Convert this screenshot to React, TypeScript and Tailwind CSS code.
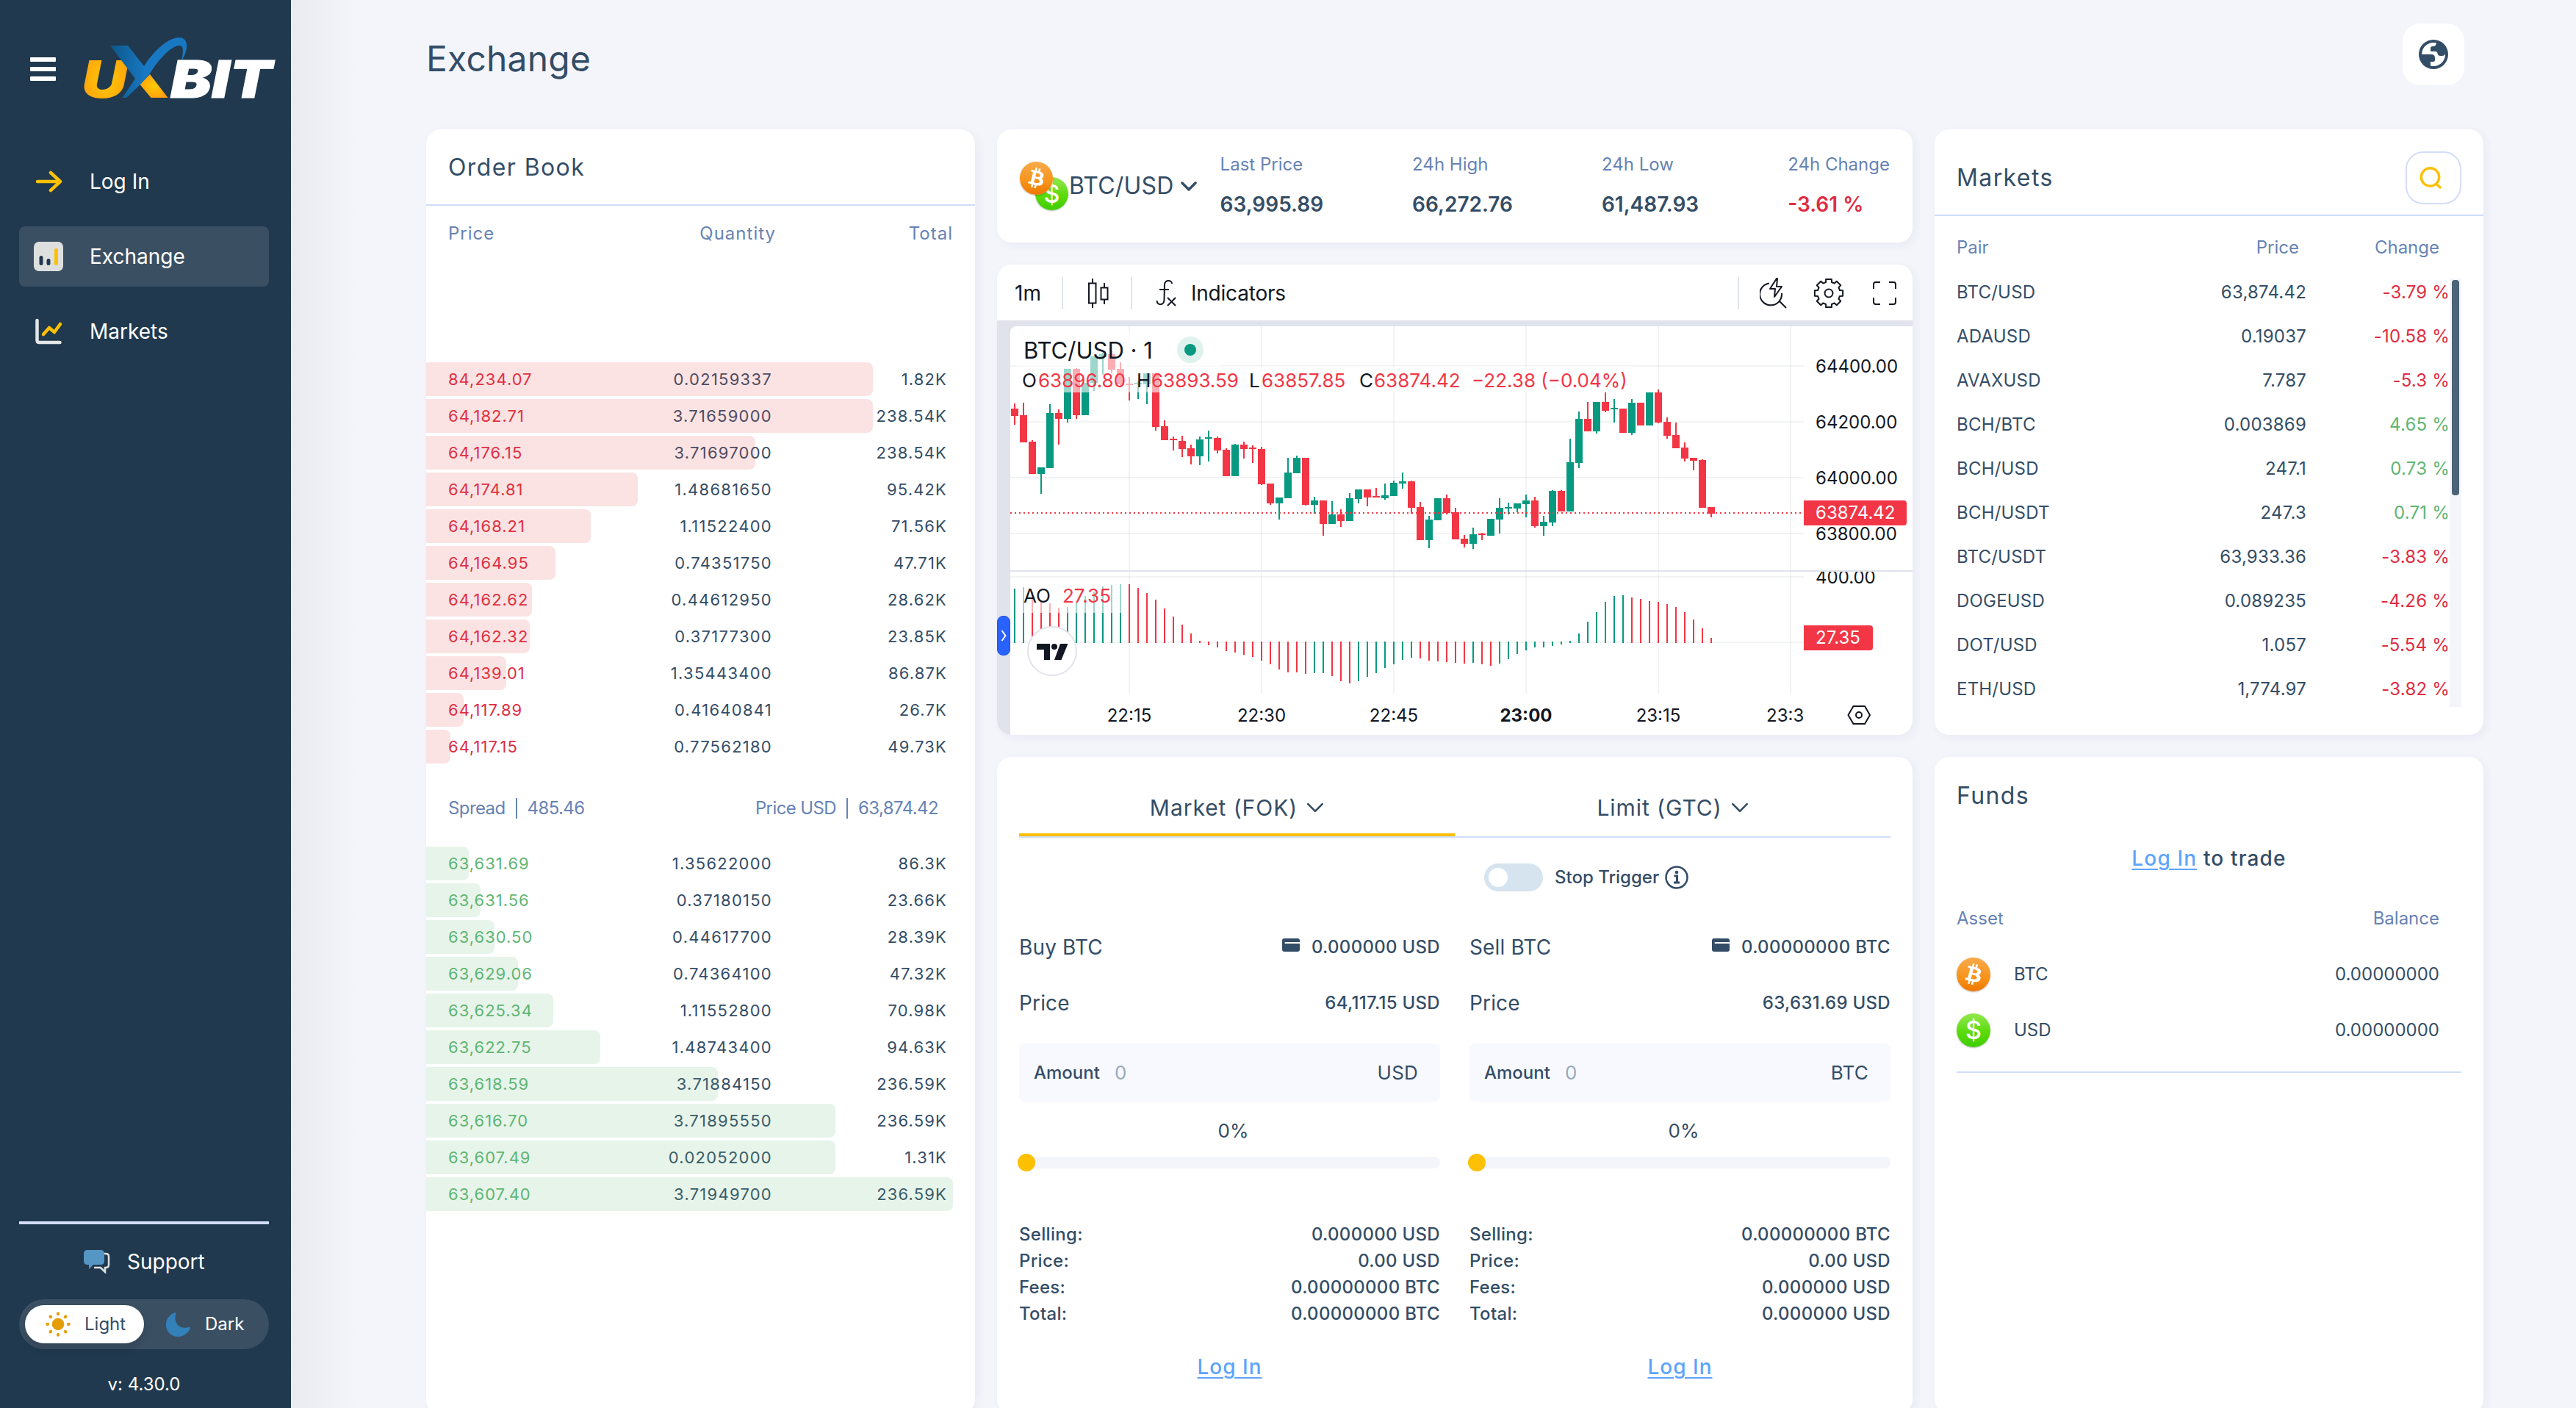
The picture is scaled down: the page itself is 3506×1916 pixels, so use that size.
import type { ReactNode } from "react"
import { SiBitcoin } from "react-icons/si"

type Candle = [number, number, number, number, 0 | 1]

const asks = [
  { price: "84,234.07", qty: "0.02159337", total: "1.82K", depth: 608 },
  { price: "64,182.71", qty: "3.71659000", total: "238.54K", depth: 608 },
  { price: "64,176.15", qty: "3.71697000", total: "238.54K", depth: 448 },
  { price: "64,174.81", qty: "1.48681650", total: "95.42K", depth: 288 },
  { price: "64,168.21", qty: "1.11522400", total: "71.56K", depth: 224 },
  { price: "64,164.95", qty: "0.74351750", total: "47.71K", depth: 176 },
  { price: "64,162.62", qty: "0.44612950", total: "28.62K", depth: 144 },
  { price: "64,162.32", qty: "0.37177300", total: "23.85K", depth: 141 },
  { price: "64,139.01", qty: "1.35443400", total: "86.87K", depth: 109 },
  { price: "64,117.89", qty: "0.41640841", total: "26.7K", depth: 51 },
  { price: "64,117.15", qty: "0.77562180", total: "49.73K", depth: 33 },
]

const bids = [
  { price: "63,631.69", qty: "1.35622000", total: "86.3K", depth: 58 },
  { price: "63,631.56", qty: "0.37180150", total: "23.66K", depth: 74 },
  { price: "63,630.50", qty: "0.44617700", total: "28.39K", depth: 93 },
  { price: "63,629.06", qty: "0.74364100", total: "47.32K", depth: 125 },
  { price: "63,625.34", qty: "1.11552800", total: "70.98K", depth: 173 },
  { price: "63,622.75", qty: "1.48743400", total: "94.63K", depth: 237 },
  { price: "63,618.59", qty: "3.71884150", total: "236.59K", depth: 397 },
  { price: "63,616.70", qty: "3.71895550", total: "236.59K", depth: 557 },
  { price: "63,607.49", qty: "0.02052000", total: "1.31K", depth: 557 },
  { price: "63,607.40", qty: "3.71949700", total: "236.59K", depth: 717 },
]

const markets = [
  { pair: "BTC/USD", price: "63,874.42", change: "-3.79 %" },
  { pair: "ADAUSD", price: "0.19037", change: "-10.58 %" },
  { pair: "AVAXUSD", price: "7.787", change: "-5.3 %" },
  { pair: "BCH/BTC", price: "0.003869", change: "4.65 %" },
  { pair: "BCH/USD", price: "247.1", change: "0.73 %" },
  { pair: "BCH/USDT", price: "247.3", change: "0.71 %" },
  { pair: "BTC/USDT", price: "63,933.36", change: "-3.83 %" },
  { pair: "DOGEUSD", price: "0.089235", change: "-4.26 %" },
  { pair: "DOT/USD", price: "1.057", change: "-5.54 %" },
  { pair: "ETH/USD", price: "1,774.97", change: "-3.82 %" },
]

const stats = [
  { label: "Last Price", value: "63,995.89" },
  { label: "24h High", value: "66,272.76" },
  { label: "24h Low", value: "61,487.93" },
  { label: "24h Change", value: "-3.61 %" },
]

// body top, body bottom, high, low, up
const candles: Candle[] = [
  [556, 566, 549, 578, 0], [565, 602, 548, 602, 0], [601, 645, 599, 645, 0], [636, 645, 636, 672, 1],
  [562, 637, 550, 637, 1], [562, 570, 557, 605, 0], [502, 570, 502, 575, 1], [502, 565, 501, 570, 0],
  [521, 565, 521, 565, 1], [485, 521, 485, 532, 1], [482, 486, 480, 510, 1], [482, 503, 477, 508, 0],
  [502, 523, 493, 525, 0], [522, 524, 513, 545, 0], [521, 523, 518, 543, 1], [508, 523, 508, 550, 1],
  [508, 581, 507, 586, 0], [580, 599, 572, 599, 0], [597, 599, 594, 613, 0], [600, 611, 593, 622, 0],
  [610, 621, 605, 632, 0], [598, 621, 594, 633, 1], [595, 597, 586, 628, 1], [596, 613, 594, 617, 0],
  [612, 648, 610, 648, 0], [605, 648, 604, 648, 1], [605, 611, 601, 624, 0], [609, 611, 606, 630, 0],
  [611, 659, 608, 660, 0], [658, 685, 658, 687, 0], [677, 685, 677, 707, 1], [643, 678, 623, 678, 1],
  [623, 644, 620, 644, 1], [623, 687, 623, 688, 0], [681, 687, 676, 699, 1], [681, 713, 681, 729, 0],
  [700, 713, 682, 713, 1], [700, 709, 693, 717, 0], [678, 709, 671, 709, 1], [666, 679, 666, 685, 1],
  [666, 677, 666, 689, 0], [675, 677, 664, 677, 0], [674, 678, 658, 680, 1], [657, 675, 654, 675, 1],
  [655, 658, 643, 665, 1], [655, 691, 654, 699, 0], [690, 735, 683, 735, 0], [707, 735, 702, 746, 1],
  [678, 708, 678, 708, 1], [678, 698, 673, 700, 0], [697, 734, 691, 734, 0], [733, 740, 728, 745, 0],
  [727, 740, 718, 747, 1], [726, 728, 725, 735, 0], [706, 729, 706, 729, 1], [691, 707, 678, 726, 1],
  [690, 692, 684, 700, 1], [685, 692, 685, 697, 1], [681, 686, 673, 704, 1], [681, 716, 676, 718, 0],
  [710, 716, 702, 729, 1], [668, 711, 667, 716, 1], [668, 696, 667, 696, 0], [629, 696, 597, 696, 1],
  [570, 630, 560, 637, 1], [570, 587, 547, 587, 0], [547, 587, 547, 590, 1], [547, 559, 534, 561, 0],
  [555, 557, 543, 575, 1], [556, 589, 556, 589, 0], [548, 589, 543, 592, 1], [548, 579, 548, 579, 0],
  [534, 579, 534, 579, 1], [534, 575, 530, 576, 0], [574, 593, 568, 597, 0], [592, 610, 575, 610, 0],
  [609, 624, 602, 628, 0], [623, 627, 623, 640, 0], [626, 691, 625, 691, 0], [690, 699, 690, 704, 0],
]

// awesome oscillator bar ends, up
const oscillator: [number, 0 | 1][] = [
  [801, 1], [799, 1], [805, 0], [817, 0], [821, 0], [827, 0], [826, 1], [820, 1], [811, 1], [805, 1],
  [798, 1], [796, 1], [795, 1], [795, 0], [800, 0], [807, 0], [816, 0], [828, 0], [839, 0], [850, 0],
  [862, 0], [872, 0], [878, 0], [881, 0], [886, 0], [888, 0], [891, 0], [894, 0], [899, 0], [904, 0],
  [911, 0], [915, 0], [915, 0], [917, 0], [916, 1], [916, 1], [920, 0], [927, 0], [930, 0], [927, 1],
  [921, 1], [916, 1], [909, 1], [904, 1], [898, 1], [895, 1], [896, 0], [899, 0], [900, 0], [901, 0],
  [902, 0], [903, 0], [902, 1], [904, 0], [906, 0], [903, 1], [897, 1], [890, 1], [885, 1], [881, 1],
  [881, 1], [879, 1], [877, 1], [872, 1], [862, 1], [846, 1], [833, 1], [819, 1], [811, 1], [810, 1],
  [813, 0], [815, 0], [818, 0], [819, 0], [822, 0], [826, 0], [833, 0], [843, 0], [855, 0], [868, 0],
]

const UP = "#089981"
const DOWN = "#f23645"
const ZERO = 874

function Card({ className = "", children }: { className?: string; children: ReactNode }) {
  return (
    <section className={`rounded-[20px] bg-white shadow-[4px_4px_12px_rgba(60,70,160,0.06)] ${className}`}>
      {children}
    </section>
  )
}

function BtcCoin({ className = "" }: { className?: string }) {
  return (
    <div className={`rounded-full bg-white shadow-[0_1px_2px_rgba(0,0,0,0.3)] ${className}`}>
      <svg width="0" height="0" className="absolute">
        <defs>
          <linearGradient id="btc" x1="0" y1="0" x2="0" y2="1">
            <stop offset="0" stopColor="#f9aa4b" />
            <stop offset="0.6" stopColor="#f7931a" />
            <stop offset="1" stopColor="#ee7700" />
          </linearGradient>
        </defs>
      </svg>
      <SiBitcoin fill="url(#btc)" stroke="none" className="h-full w-full" />
    </div>
  )
}

function UsdCoin({ className = "" }: { className?: string }) {
  return (
    <div
      className={`flex items-center justify-center rounded-full bg-linear-to-b from-[#92e84b] via-[#5fdc0c] to-[#3ccd00] shadow-[0_1px_2px_rgba(0,0,0,0.3)] ${className}`}
    >
      <span className="text-[34px] leading-none font-medium text-white">$</span>
    </div>
  )
}

function Chevron({ className = "", stroke = 3 }: { className?: string; stroke?: number }) {
  return (
    <svg viewBox="0 0 22 13" fill="none" stroke="currentColor" strokeWidth={stroke} strokeLinecap="round" strokeLinejoin="round" className={className}>
      <path d="M2 2l9 9 9-9" />
    </svg>
  )
}

function Logo() {
  return (
    <svg width="264" height="92" viewBox="112 51 264 92" overflow="visible">
      <defs>
        <radialGradient id="gold" cx="0.5" cy="0.5" r="0.6">
          <stop offset="0" stopColor="#ffcb05" />
          <stop offset="1" stopColor="#fe9a0e" />
        </radialGradient>
        <linearGradient id="blue" x1="0" y1="0" x2="1" y2="0">
          <stop offset="0" stopColor="#0d5688" />
          <stop offset="0.45" stopColor="#1878c2" />
          <stop offset="1" stopColor="#1878c2" />
        </linearGradient>
      </defs>
      <text x="111" y="133" fontSize="70" fontWeight="900" fontStyle="italic" fill="url(#gold)" textLength="62" lengthAdjust="spacingAndGlyphs">
        U
      </text>
      <path d="M204 101l24.500 32h-23l-15-18z" fill="url(#gold)" />
      <path d="M150 62h24l22 28c12-19 32-39 48-39 14 1 12 18 3 32 2-11 4-21-3-21-12 0-30 22-40 38l-13 15-19 18h-5.500l17.500-26z" fill="url(#blue)" />
      <text x="232" y="133" fontSize="70" fontWeight="900" fontStyle="italic" fill="#fff" stroke="#fff" strokeWidth="1" textLength="138" lengthAdjust="spacingAndGlyphs">
        BIT
      </text>
    </svg>
  )
}

function Sidebar() {
  return (
    <aside className="flex w-[396px] shrink-0 flex-col bg-[#20394e] pr-[30px] pl-[26px] text-white">
      <div className="flex h-[186px] items-start pt-[51px] pl-[15px]">
        <div className="mt-[27px] mr-[36px] flex w-[35px] shrink-0 flex-col gap-[7px]">
          <span className="h-[6px] rounded-[1px] bg-white" />
          <span className="h-[6px] rounded-[1px] bg-white" />
          <span className="h-[6px] rounded-[1px] bg-white" />
        </div>
        <div className="w-[254px]">
          <Logo />
        </div>
      </div>

      <nav className="mt-[20px] flex flex-col gap-[20px] text-[28px] leading-none">
        <a className="flex h-[82px] items-center pl-[20px]">
          <svg width="40" height="40" viewBox="46 227 40 40" fill="none" stroke="#fdc003" strokeWidth="4.5" strokeLinecap="round" strokeLinejoin="round">
            <path d="M51 247h30M69 235l13 12-13 12" />
          </svg>
          <span className="ml-[36px]">Log In</span>
        </a>
        <a className="flex h-[82px] items-center rounded-lg bg-[#3b4f63] pl-[20px]">
          <svg width="40" height="40" viewBox="46 329 40 40">
            <rect x="46" y="329" width="40" height="40" rx="7" fill="#dee0df" />
            <rect x="53.5" y="348" width="5" height="13" rx="2.5" fill="#20394e" />
            <rect x="63.5" y="352" width="5" height="9" rx="2.5" fill="#20394e" />
            <rect x="74" y="338" width="5" height="23" rx="2.5" fill="#fdc003" />
          </svg>
          <span className="ml-[36px]">Exchange</span>
        </a>
        <a className="flex h-[82px] items-center pl-[20px]">
          <svg width="40" height="40" viewBox="46 431 40 40" fill="none" strokeWidth="4.5" strokeLinecap="round" strokeLinejoin="round">
            <path d="M50.500 436v27q0 3 3 3h28" stroke="#e4e6e6" />
            <path d="M59 455l8-9 7 6 8-11" stroke="#fdc003" />
          </svg>
          <span className="ml-[36px]">Markets</span>
        </a>
      </nav>

      <div className="mt-auto h-[4px] bg-[#d3ddf9]" />
      <div className="flex h-[102px] items-center pl-[88px] text-[28px] leading-none">
        <svg width="36" height="32" viewBox="114 1702 36 32">
          <path d="M136 1707h8q4 0 4 4v11q0 4-4 4h-1v6l-6-6h-9" fill="none" stroke="#dee0df" strokeWidth="2.500" />
          <path d="M119 1702h18q5 0 5 5v10q0 5-5 5h-10l-6 6v-6h-2q-5 0-5-5v-10q0-5 5-5z" fill="#5596c4" />
        </svg>
        <span className="ml-[23px]">Support</span>
      </div>
      <div className="flex h-[68px] items-center rounded-full bg-[#3b4f63] px-2 text-2xl leading-none">
        <div className="flex h-[52px] w-[162px] items-center rounded-full bg-white pl-[28px] text-[#344d66] shadow-[0_8px_12px_rgba(0,0,0,0.12)]">
          <svg width="34" height="34" viewBox="-17 -17 34 34" stroke="#e59d07" strokeWidth="4" strokeLinecap="round">
            <circle r="8.300" fill="#e59d07" stroke="none" />
            {[0, 45, 90, 135, 180, 225, 270, 315].map((deg) => (
              <path key={deg} d="M0 -13.800v-1" transform={`rotate(${deg})`} />
            ))}
          </svg>
          <span className="ml-[19px]">Light</span>
        </div>
        <svg width="33" height="33" viewBox="0 0 33 33" className="ml-[30px]">
          <path d="M11 .5c2-1 3 .5 2 2.500C10 13 18 24 30 20c2-.5 3.500.5 2.500 2.500C29 29 23 33 16.500 33 7 33 0 26 0 17 0 9 4 3.500 11 .5z" fill="#3480b9" />
        </svg>
        <span className="ml-[20px]">Dark</span>
      </div>
      <p className="flex h-[80px] items-center justify-center pt-[16px] text-2xl leading-none">v: 4.30.0</p>
    </aside>
  )
}

function DepthRow({ row, side }: { row: (typeof asks)[number]; side: "ask" | "bid" }) {
  return (
    <div className="relative flex h-[46px] items-center text-[22px] leading-none tracking-[1px] text-[#344d66]">
      <span className={`w-[240px] pl-[30px] ${side === "ask" ? "text-[#e02d41]" : "text-[#5fb673]"}`}>{row.price}</span>
      <span className="w-[231px] text-right tracking-[1.250px]">{row.qty}</span>
      <span className="w-[238px] text-right tracking-[1.150px]">{row.total}</span>
      <div
        className={`absolute inset-y-0 left-0 rounded-r-lg ${side === "ask" ? "bg-[#e44444]/15" : "bg-[#5fb673]/15"}`}
        style={{ width: row.depth }}
      />
    </div>
  )
}

function OrderBook() {
  return (
    <Card className="h-[1748px]">
      <h2 className="flex h-[104px] items-center border-b-2 border-[#cfddfa] pt-[2px] pl-[30px] text-[32px] leading-none tracking-[1.400px]">Order Book</h2>
      <div className="flex h-[76px] items-center text-2xl leading-none tracking-[1px] text-[#6783b5]">
        <span className="w-[240px] pl-[30px]">Price</span>
        <span className="w-[236px] text-right">Quantity</span>
        <span className="w-[241px] text-right">Total</span>
      </div>
      <div className="mt-[137px] flex flex-col gap-1">
        {asks.map((row) => (
          <DepthRow key={row.price} row={row} side="ask" />
        ))}
      </div>
      <div className="flex h-[113px] items-center justify-between pr-[50px] pl-[30px] text-2xl leading-none tracking-[-0.600px] text-[#6783b5]">
        <div className="mt-[8px] flex items-center">
          Spread<span className="mx-[14px] h-[28px] w-[2px] bg-[#6783b5]" />485.46
        </div>
        <div className="mt-[8px] flex items-center">
          Price USD<span className="mx-[14px] h-[28px] w-[2px] bg-[#6783b5]" />63,874.42
        </div>
      </div>
      <div className="flex flex-col gap-1">
        {bids.map((row) => (
          <DepthRow key={row.price} row={row} side="bid" />
        ))}
      </div>
    </Card>
  )
}

function PairHeader() {
  return (
    <Card className="flex h-[154px] items-center pr-[31px] pl-[31px]">
      <div className="relative h-[66px] w-[66px]">
        <UsdCoin className="absolute right-0 bottom-0 h-[45px] w-[45px]" />
        <BtcCoin className="absolute top-0 left-0 h-[45px] w-[45px]" />
      </div>
      <span className="ml-[1px] text-[32px] leading-none tracking-[0.200px]">BTC/USD</span>
      <Chevron className="ml-[9px] h-[13px] w-[22px]" stroke={3.5} />
      <div className="ml-[32px] flex flex-1 justify-between pb-[4px]">
        {stats.map((stat) => (
          <div key={stat.label} className="flex flex-col gap-[26px] leading-none">
            <span className="text-2xl leading-[28px] text-[#6783b5]">{stat.label}</span>
            <span className={`text-[28px] leading-[28px] font-semibold ${stat.value.startsWith("-") ? "text-[#e02d41]" : ""}`}>{stat.value}</span>
          </div>
        ))}
      </div>
    </Card>
  )
}

function gearPath(teeth: number, inner: number, outer: number) {
  const step = (Math.PI * 2) / teeth
  const points: string[] = []
  for (let i = 0; i < teeth; i++) {
    const a = i * step - Math.PI / 2
    const corners = [[-0.26, inner], [-0.2, outer], [0.2, outer], [0.26, inner]]
    corners.forEach(([offset, r]) => points.push(`${(r * Math.cos(a + offset)).toFixed(2)} ${(r * Math.sin(a + offset)).toFixed(2)}`))
  }
  return `M${points.join("L")}Z`
}

function ChartToolbar() {
  return (
    <div className="flex h-[76px] items-center pt-[1px] pr-[21px] pl-[24px] text-[28px] leading-none text-[#131722]">
      <span>1m</span>
      <span className="ml-[28px] h-[44px] w-[2px] bg-[#e0e3eb]" />
      <svg width="28" height="40" viewBox="0 0 28 40" fill="none" stroke="currentColor" strokeWidth="2" className="ml-[34px]">
        <path d="M6 0v6M6 34v6M1 6.500h9.500v27H1zM22 6v6M22 29v6M17.500 12.500h9v16h-9z" />
      </svg>
      <span className="ml-[30px] h-[44px] w-[2px] bg-[#e0e3eb]" />
      <svg width="28" height="36" viewBox="0 0 28 36" fill="none" stroke="currentColor" strokeWidth="2" className="ml-[32px]">
        <path d="M22 5c0-5-9-6-10 1l-.5 21c0 8-10 8-10 1M5 13h13M16 24l11 11M27 24L16 35" />
      </svg>
      <span className="ml-[20px] tracking-[-0.200px]">Indicators</span>
      <span className="ml-auto h-[44px] w-[2px] bg-[#e0e3eb]" />
      <svg width="38" height="42" viewBox="0 0 38 42" fill="none" stroke="currentColor" strokeWidth="2" className="ml-[28px]">
        <path d="M13 7.500A15 15 0 1 0 30 21M27 32l9 9M23 1l-9 14h7l-1 11 10-14h-7l1-11z" strokeLinejoin="round" />
      </svg>
      <svg width="42" height="42" viewBox="-21 -21 42 42" fill="none" stroke="currentColor" strokeWidth="2" strokeLinejoin="round" className="ml-[35px]">
        <path d={gearPath(8, 15.5, 19.5)} />
        <circle r="5.500" />
      </svg>
      <svg width="34" height="34" viewBox="0 0 34 34" fill="none" stroke="currentColor" strokeWidth="2" className="ml-[38px]">
        <path d="M2 11V5q0-3 3-3h6M23 2h6q3 0 3 3v6M32 23v6q0 3-3 3h-6M11 32H5q-3 0-3-3v-6" />
      </svg>
    </div>
  )
}

function Chart() {
  return (
    <div className="relative flex h-[564px] overflow-hidden rounded-b-[20px] bg-[#e0e3eb] pt-2 pl-[18px]">
      <div className="overflow-hidden rounded-tl-lg bg-white">
        <svg width="1228" height="556" viewBox="1375 444 1228 556" fontSize="24" fill="#131722">
          <g fill="#2a2e39" fillOpacity="0.06">
            {[1536, 1716, 1896, 2076, 2256, 2436].map((x) => (
              <rect key={x} x={x} y="444" width="2" height="500" />
            ))}
            {[497, 573, 649, 725, 784, 873].map((y) => (
              <rect key={y} x="1375" y={y} width="1080" height="2" />
            ))}
          </g>
          {candles.map(([top, bottom, high, low, up], i) => {
            const x = 1381 + i * 12
            return (
              <g key={i} fill={up ? UP : DOWN}>
                <rect x={x - 1} y={high} width="2" height={low - high} />
                <rect x={x - 5} y={top} width="10" height={bottom - top} />
              </g>
            )
          })}
          {oscillator.map(([end, up], i) => (
            <rect
              key={i}
              x={1380 + i * 12}
              y={end < ZERO ? end : ZERO - 1}
              width="2"
              height={end < ZERO ? ZERO + 1 - end : end - ZERO + 1}
              fill={up ? UP : DOWN}
            />
          ))}
          <path d="M1375 698H2455" stroke={DOWN} strokeWidth="2" strokeDasharray="2 4" />
          <rect x="1375" y="776" width="1228" height="2" fill="#e0e3eb" />

          <rect x="1383" y="452" width="278" height="46" fill="#fff" fillOpacity="0.6" />
          <rect x="1383" y="498" width="840" height="36" fill="#fff" fillOpacity="0.6" />
          <rect x="1383" y="794" width="152" height="40" fill="#fff" fillOpacity="0.6" />
          <text x="1393" y="488" fontSize="31">BTC/USD · 1</text>
          <circle cx="1620" cy="476" r="18" fill="#e0f2ee" />
          <circle cx="1620" cy="476" r="8" fill={UP} />
          <g fontSize="26">
            <text x="1391" y="527">O</text>
            <text x="1547" y="527">H</text>
            <text x="1700" y="527">L</text>
            <text x="1850" y="527">C</text>
            <g fill={DOWN}>
              <text x="1413" y="527">63896.80</text>
              <text x="1567" y="527">63893.59</text>
              <text x="1717" y="527">63857.85</text>
              <text x="1870" y="527">63874.42</text>
              <text x="2003" y="527">−22.38 (−0.04%)</text>
              <text x="1446" y="820">27.35</text>
            </g>
            <text x="1393" y="820">AO</text>
          </g>

          <text x="2471" y="507">64400.00</text>
          <text x="2471" y="583">64200.00</text>
          <text x="2471" y="659">64000.00</text>
          <text x="2471" y="735">63800.00</text>
          <clipPath id="lower">
            <rect x="2455" y="778" width="148" height="160" />
          </clipPath>
          <text x="2471" y="794" clipPath="url(#lower)">400.00</text>
          <path d="M2455 681h136q4 0 4 4v26q0 4-4 4h-136z" fill={DOWN} />
          <path d="M2455 851h90q4 0 4 4v26q0 4-4 4h-90z" fill={DOWN} />
          <text x="2471" y="706" fill="#fff">63874.42</text>
          <text x="2471" y="876" fill="#fff">27.35</text>

          <g textAnchor="middle">
            <text x="1537" y="982">22:15</text>
            <text x="1717" y="982">22:30</text>
            <text x="1897" y="982">22:45</text>
            <text x="2077" y="982" fontWeight="700">23:00</text>
            <text x="2257" y="982">23:15</text>
          </g>
          <text x="2404" y="982">23:3</text>
          <path d="M2522.500 961h15.500l7 12-7 12h-15.500l-7-12z" fill="none" stroke="#131722" strokeWidth="2" />
          <circle cx="2530" cy="973" r="4" fill="none" stroke="#131722" strokeWidth="2" />

          <circle cx="1432" cy="886" r="33" fill="#fff" stroke="#e0e3eb" strokeWidth="2" />
          <path d="M1411 876h18v22h-8v-14h-10zM1443 876h10.500l-9 22h-9.500z" />
          <circle cx="1435" cy="880" r="4" />
        </svg>
      </div>
      <div className="absolute top-[402px] left-0 flex h-[54px] w-[18px] items-center justify-center rounded-lg border border-[#1e53e5] bg-[#2962ff]">
        <svg width="8" height="16" viewBox="0 0 8 16" fill="none" stroke="#fff" strokeWidth="2">
          <path d="M1.500 1l5 7-5 7" />
        </svg>
      </div>
    </div>
  )
}

function WalletIcon() {
  return (
    <svg width="24" height="18" viewBox="0 0 24 18" className="mr-[16px] mb-[6px]">
      <rect width="24" height="18" rx="3" fill="#344d66" />
      <path d="M4.500 6H24" stroke="#fff" strokeWidth="2" strokeLinecap="round" />
    </svg>
  )
}

function OrderForm({ title, balance, price, unit, rows }: { title: string; balance: string; price: string; unit: string; rows: string[][] }) {
  return (
    <div className="flex w-[573px] flex-col">
      <div className="flex h-[36px] items-center justify-between text-[28px] leading-none tracking-[0.150px]">
        {title}
        <span className="flex items-center text-2xl leading-none font-medium tracking-[0.300px]">
          <WalletIcon />
          {balance}
        </span>
      </div>
      <div className="mt-[40px] flex h-[36px] items-center justify-between text-[28px] leading-none tracking-[0.150px]">
        Price
        <span className="text-2xl leading-none font-medium tracking-[0.300px]">{price}</span>
      </div>
      <div className="mt-[37px] flex h-[79px] items-center rounded-lg bg-[#f8f9fe] pr-[30px] pl-[20px] leading-none">
        <span className="text-2xl leading-none font-medium">Amount</span>
        <span className="ml-[20px] text-[26px] leading-none text-[#9aa9b8]">0</span>
        <span className="ml-auto text-[26px] leading-none tracking-[0.200px]">{unit}</span>
      </div>
      <div className="mt-[26px] flex h-[28px] items-center justify-center pl-[10px] text-[26px] leading-none">0%</div>
      <div className="mt-[21px] flex h-[16px] items-center rounded-full bg-[#f4f5fa]">
        <span className="-ml-[2px] h-[24px] w-[24px] rounded-full bg-[#fdc003]" />
      </div>
      <div className="mt-[72px] text-2xl leading-[36px] font-medium tracking-[0.300px]">
        {rows.map(([label, value]) => (
          <div key={label} className="flex justify-between">
            <span>{label}</span>
            <span>{value}</span>
          </div>
        ))}
      </div>
      <a className="mt-[36px] self-center text-[28px] leading-[36px] font-medium tracking-[1px] text-[#5ea4fb] underline decoration-2 underline-offset-4">Log In</a>
    </div>
  )
}

function TradeCard() {
  return (
    <Card className="h-[894px] px-[30px] pt-[30px]">
      <div className="flex border-b-2 border-[#cfddfa] text-[30px] leading-none">
        <div className="flex h-[78px] w-[593px] items-center justify-center border-b-4 border-[#fdc003] pt-[3px] tracking-[0.950px]">
          Market (FOK)
          <Chevron className="ml-[12px] h-[14px] w-[24px]" stroke={2.5} />
        </div>
        <div className="flex h-[74px] w-[593px] items-center justify-center pt-[3px] tracking-[0.950px]">
          Limit (GTC)
          <Chevron className="ml-[12px] h-[14px] w-[24px]" stroke={2.5} />
        </div>
      </div>
      <div className="mt-[35px] ml-[633px] flex h-[38px] items-center text-2xl leading-none font-medium">
        <div className="flex h-[38px] w-[80px] items-center rounded-full bg-[#d6e4f0] pl-[6px]">
          <span className="h-[26px] w-[26px] rounded-full bg-white" />
        </div>
        <span className="ml-[16px]">Stop Trigger</span>
        <svg width="32" height="32" viewBox="0 0 32 32" fill="none" stroke="currentColor" strokeWidth="2.500" className="ml-[8px]">
          <circle cx="16" cy="16" r="14.500" />
          <path d="M12.500 14h4v9M12 23h8" strokeWidth="3" />
          <circle cx="16" cy="9" r="2.300" fill="currentColor" stroke="none" />
        </svg>
      </div>
      <div className="mt-[58px] flex justify-between">
        <OrderForm
          title="Buy BTC"
          balance="0.000000 USD"
          price="64,117.15 USD"
          unit="USD"
          rows={[["Selling:", "0.000000 USD"], ["Price:", "0.00 USD"], ["Fees:", "0.00000000 BTC"], ["Total:", "0.00000000 BTC"]]}
        />
        <OrderForm
          title="Sell BTC"
          balance="0.00000000 BTC"
          price="63,631.69 USD"
          unit="BTC"
          rows={[["Selling:", "0.00000000 BTC"], ["Price:", "0.00 USD"], ["Fees:", "0.000000 USD"], ["Total:", "0.000000 USD"]]}
        />
      </div>
    </Card>
  )
}

function Markets() {
  return (
    <Card className="h-[824px]">
      <div className="flex h-[118px] items-center justify-between border-b-2 border-[#cfddfa] pt-[16px] pr-[30px] pl-[30px]">
        <h2 className="text-[32px] leading-none tracking-[1.400px]">Markets</h2>
        <div className="flex h-[72px] w-[76px] items-center justify-center rounded-[24px] border-2 border-[#d3ddf9]">
          <svg width="30" height="30" viewBox="0 0 30 30" fill="none" stroke="#fdc003" strokeWidth="3.500" strokeLinecap="round" className="-ml-[8px]">
            <circle cx="14.500" cy="14" r="12.200" />
            <path d="M23 23.500l5 4.500" />
          </svg>
        </div>
      </div>
      <div className="flex h-[85px] items-center text-2xl leading-none text-[#6783b5]">
        <span className="w-[240px] pl-[30px]">Pair</span>
        <span className="w-[256px] text-right">Price</span>
        <span className="w-[191px] text-right">Change</span>
      </div>
      <div className="mr-[30px] flex h-[583px] justify-between">
        <div className="flex flex-col gap-[24px] pt-[1px]">
          {markets.map((m) => (
            <div key={m.pair} className="flex h-[36px] items-center text-2xl leading-none tracking-[0.200px]">
              <span className="w-[240px] pl-[30px]">{m.pair}</span>
              <span className="w-[266px] text-right">{m.price}</span>
              <span className={`w-[195px] text-right ${m.change.startsWith("-") ? "text-[#e02d41]" : "text-[#5fb673]"}`}>{m.change}</span>
            </div>
          ))}
        </div>
        <div className="w-[16px] bg-[#f4f5fa] px-[3px] pt-[2px]">
          <div className="h-[293px] rounded-[4px] bg-[#4d6377]" />
        </div>
      </div>
    </Card>
  )
}

function Funds() {
  return (
    <Card className="h-[894px] px-[30px]">
      <h2 className="pt-[37px] text-[32px] leading-[32px] tracking-[1.400px]">Funds</h2>
      <p className="mt-[55px] text-center text-[28px] leading-[28px] font-medium tracking-[1.150px]">
        <a className="text-[#5ea4fb] underline decoration-2 underline-offset-4">Log In</a> to trade
      </p>
      <div className="mt-[43px] flex h-[50px] items-center justify-between pr-[30px] text-2xl leading-none text-[#6783b5]">
        <span>Asset</span>
        <span>Balance</span>
      </div>
      <div className="border-b-2 border-[#cfddfa] pb-[18px] text-2xl leading-none">
        <div className="mt-[13px] flex h-[76px] items-center pr-[30px]">
          <BtcCoin className="h-[46px] w-[46px]" />
          <span className="ml-[32px]">BTC</span>
          <span className="ml-auto">0.00000000</span>
        </div>
        <div className="flex h-[76px] items-center pr-[30px]">
          <UsdCoin className="h-[46px] w-[46px]" />
          <span className="ml-[32px]">USD</span>
          <span className="ml-auto">0.00000000</span>
        </div>
      </div>
    </Card>
  )
}

export default function App() {
  return (
    <div className="flex h-[1916px] w-full overflow-hidden bg-[#f4f5fa] font-['Inter',sans-serif] text-[#344d66]">
      <Sidebar />
      <main className="flex-1 bg-[linear-gradient(to_right,#eaebf1,#f4f5fa_90px)] pt-[32px] pr-[126px] pl-[184px]">
        <header className="flex h-[84px] items-center justify-between pr-[26px]">
          <h1 className="pt-[12px] text-[48px] leading-none tracking-[0.200px]">Exchange</h1>
          <button className="flex h-[84px] w-[84px] items-center justify-center rounded-[24px] bg-white">
            <svg width="40" height="40" viewBox="0 0 40 40">
              <circle cx="20" cy="20" r="20" fill="currentColor" />
              <path
                d="M4 20A16 16 0 0 1 24 4.500C24 7 22 9 20 9h-1q-3 0-3 2.500V16h7q2 0 2.500 2.500.5 3.500 4 3.500H32q2.500 0 4-2.500A16 16 0 0 1 16 35.600V30h3.500q2.500 0 2.500-2.500V25q0-5-5-5z"
                fill="#fff"
              />
            </svg>
          </button>
        </header>
        <div className="mt-[60px] grid grid-cols-[747px_1246px_747px] gap-[30px]">
          <OrderBook />
          <div className="flex flex-col gap-[30px]">
            <PairHeader />
            <Card className="h-[640px]">
              <ChartToolbar />
              <Chart />
            </Card>
            <TradeCard />
          </div>
          <div className="flex flex-col gap-[30px]">
            <Markets />
            <Funds />
          </div>
        </div>
      </main>
    </div>
  )
}
